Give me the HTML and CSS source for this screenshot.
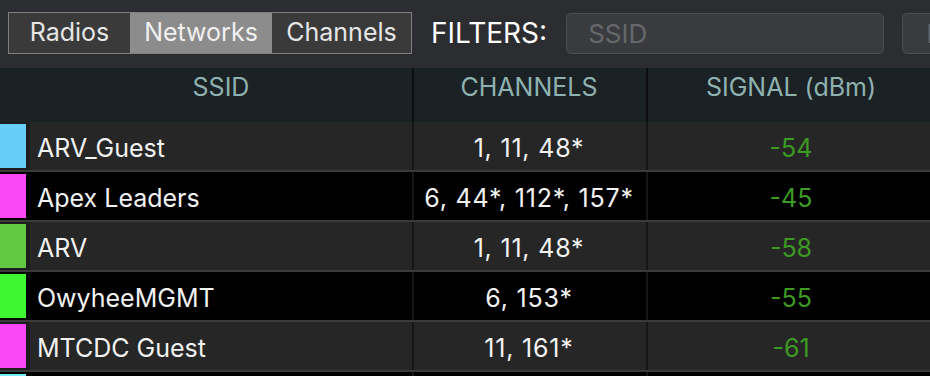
FILE: index.html
```html
<!DOCTYPE html>
<html lang="en">
<head>
    <meta charset="UTF-8">
    <title>Networks</title>
    <link rel="stylesheet" href="styles.css">
</head>
<body>
    <div class="toolbar">
        <div class="segmented">
            <div class="segment seg-radios">Radios</div>
            <div class="segment seg-networks active">Networks</div>
            <div class="segment seg-channels">Channels</div>
        </div>
        <span class="filters-label">FILTERS:</span>
        <div class="filter-input filter-ssid"><span class="placeholder">SSID</span></div>
        <div class="filter-input filter-next"><span class="placeholder">BSSID</span></div>
    </div>

    <div class="table">
        <div class="row header">
            <div class="cell color-cell"></div>
            <div class="cell ssid">SSID</div>
            <div class="cell channels">CHANNELS</div>
            <div class="cell signal">SIGNAL (dBm)</div>
        </div>
        <div class="row odd">
            <div class="cell color-cell"><span class="swatch" style="background:#66cdf8"></span></div>
            <div class="cell ssid">ARV_Guest</div>
            <div class="cell channels">1, 11, 48*</div>
            <div class="cell signal">-54</div>
        </div>
        <div class="row even">
            <div class="cell color-cell"><span class="swatch" style="background:#fb48f6"></span></div>
            <div class="cell ssid">Apex Leaders</div>
            <div class="cell channels">6, 44*, 112*, 157*</div>
            <div class="cell signal">-45</div>
        </div>
        <div class="row odd">
            <div class="cell color-cell"><span class="swatch" style="background:#63c842"></span></div>
            <div class="cell ssid">ARV</div>
            <div class="cell channels">1, 11, 48*</div>
            <div class="cell signal">-58</div>
        </div>
        <div class="row even">
            <div class="cell color-cell"><span class="swatch" style="background:#3ff730"></span></div>
            <div class="cell ssid">OwyheeMGMT</div>
            <div class="cell channels">6, 153*</div>
            <div class="cell signal">-55</div>
        </div>
        <div class="row odd">
            <div class="cell color-cell"><span class="swatch" style="background:#fb48f6"></span></div>
            <div class="cell ssid">MTCDC Guest</div>
            <div class="cell channels">11, 161*</div>
            <div class="cell signal">-61</div>
        </div>
        <div class="row even">
            <div class="cell color-cell"><span class="swatch" style="background:#72eff5"></span></div>
            <div class="cell ssid"></div>
            <div class="cell channels"></div>
            <div class="cell signal"></div>
        </div>
    </div>
</body>
</html>
```

FILE: styles.css
```css
body {
    margin: 0;
    padding: 0;
    background-color: #000;
    font-family: Inter, "Liberation Sans", Arial, sans-serif;
    color: #f2f2f2;
    overflow: hidden;
}
.toolbar {
    height: 68px;
    box-sizing: border-box;
    background-color: #2c2d31;
    display: flex;
    align-items: center;
    padding-left: 8px;
    padding-bottom: 2px;
    white-space: nowrap;
}
.segmented {
    display: flex;
    height: 42px;
    box-sizing: border-box;
    border: 1px solid #7f7f7f;
    background-color: #3a3a3a;
}
.segment {
    display: flex;
    align-items: center;
    justify-content: center;
    font-size: 25px;
    color: #e6e6e6;
    padding-bottom: 2px;
}
.seg-radios {
    width: 121px;
}
.seg-networks {
    width: 142px;
}
.seg-channels {
    width: 139px;
}
.segment.active {
    background-color: #8c8c8c;
    color: #f0f0f0;
}
.filters-label {
    margin-left: 19px;
    font-size: 28px;
    color: #fff;
}
.filter-input {
    height: 41px;
    box-sizing: border-box;
    background-color: #3a3b3e;
    border: 1px solid #4c4d51;
    border-radius: 5px;
    display: flex;
    align-items: center;
    flex-shrink: 0;
    overflow: hidden;
}
.filter-ssid {
    width: 318px;
    margin-left: 19px;
    padding-left: 21px;
}
.filter-next {
    width: 200px;
    margin-left: 18px;
    padding-left: 23px;
}
.placeholder {
    font-size: 26px;
    color: #66676a;
}
.table {
    display: flex;
    flex-direction: column;
}
.row {
    display: grid;
    grid-template-columns: 30px 382px 234px 288px;
    height: 50px;
    box-sizing: border-box;
    border-bottom: 2px solid #3a3a3a;
    font-size: 25px;
    white-space: nowrap;
}
.row.header {
    height: 54px;
    border-bottom: none;
    background-color: #1b2225;
    color: #8fb2b0;
}
.row.odd {
    background-color: #262626;
}
.row.even {
    background-color: #000;
}
.cell {
    display: flex;
    align-items: center;
    box-sizing: border-box;
    padding-top: 3px;
}
.header .cell {
    padding-top: 0;
    padding-bottom: 16px;
}
.color-cell {
    padding: 2px 4px 0 0;
    align-items: stretch;
}
.row.odd .color-cell {
    background-color: #1d1d1d;
}
.row.even .color-cell {
    background-color: #000;
}
.row.header .color-cell {
    background-color: transparent;
}
.swatch {
    display: block;
    width: 26px;
    height: 44px;
}
.ssid {
    padding-left: 7px;
}
.header .ssid,
.channels,
.signal {
    justify-content: center;
}
.header .ssid {
    padding-left: 0;
}
.channels {
    border-left: 2px solid #161616;
    padding-right: 2px;
    letter-spacing: 0.8px;
}
.header .channels {
    letter-spacing: 0;
}
.header .channels,
.header .signal {
    border-left-color: #0b0d0e;
}
.signal {
    border-left: 2px solid #161616;
    color: #3c9b22;
}
.header .signal {
    color: #8fb2b0;
}
```
